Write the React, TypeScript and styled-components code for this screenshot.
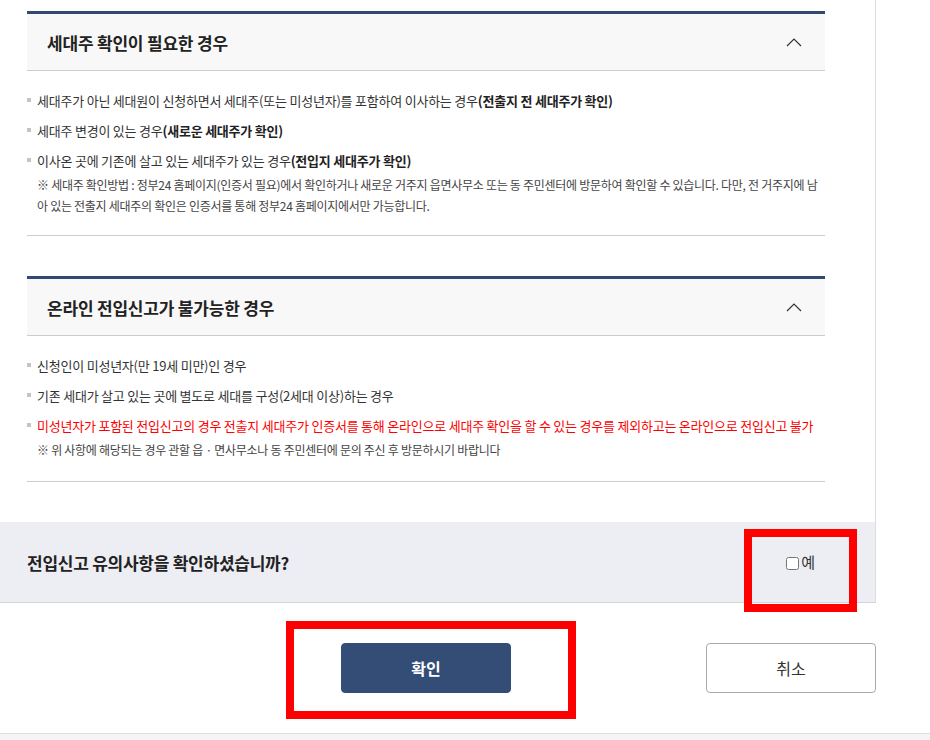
import React from 'react';
import styled, { createGlobalStyle } from 'styled-components';

const GlobalStyle = createGlobalStyle`
  html, body {
    margin: 0;
    padding: 0;
    background: #fff;
  }
  body {
    font-family: "Noto Sans CJK KR", "Noto Sans", sans-serif;
    color: #333;
  }
`;

const Page = styled.div`
  width: 930px;
  min-height: 740px;
  display: flex;
  flex-direction: column;
`;

const Panel = styled.div`
  width: 876px;
  box-sizing: border-box;
  border-right: 1px solid #ddd;
`;

const Inner = styled.div`
  padding: 11px 50px 0 27px;
`;

const Section = styled.section`
  margin-bottom: 40px;
`;

const SectionHead = styled.div`
  height: 56px;
  display: flex;
  align-items: center;
  justify-content: space-between;
  padding: 0 23px 0 20px;
  background: #f8f8f8;
  border-top: 3px solid #34496f;
  border-bottom: 1px solid #ccc;
`;

const SectionTitle = styled.h3`
  margin: 0;
  font-size: 17px;
  font-weight: 700;
  letter-spacing: -0.2px;
  color: #222;
`;

const SectionBody = styled.ul<{ $pb?: number }>`
  list-style: none;
  margin: 0;
  padding: 15px 0 ${(p) => p.$pb ?? 19}px;
  border-bottom: 1px solid #ccc;
`;

const Item = styled.li<{ $red?: boolean }>`
  position: relative;
  padding-left: 10px;
  font-size: 13px;
  line-height: 30px;
  letter-spacing: -0.22px;
  color: ${(p) => (p.$red ? '#ff0000' : '#333')};
  &::before {
    content: '';
    position: absolute;
    left: 0;
    top: 12px;
    width: 4px;
    height: 4px;
    background: #c4c4c4;
  }
`;

const Strong = styled.b`
  font-weight: 700;
  color: #222;
`;

const Note = styled.p`
  margin: -2px 0 0;
  padding: 0 2px 0 10px;
  font-size: 12px;
  line-height: 21px;
  letter-spacing: -0.28px;
  word-break: break-all;
  color: #444;
`;

const Chevron = () => (
  <svg width="16" height="10" viewBox="0 0 16 10">
    <polyline points="1,9 8,2 15,9" fill="none" stroke="#333" strokeWidth="1.2" />
  </svg>
);

const ConfirmBar = styled.div`
  position: relative;
  height: 80px;
  display: flex;
  align-items: center;
  justify-content: space-between;
  padding: 0 60px 0 27px;
  background: #edeef3;
  border-bottom: 1px solid #d5d5d5;
`;

const Question = styled.strong`
  font-size: 17px;
  font-weight: 700;
  letter-spacing: -0.25px;
  color: #222;
`;

const CheckLabel = styled.label`
  display: flex;
  align-items: center;
  gap: 2px;
  font-size: 15px;
  color: #333;
  margin-top: -2px;
  input {
    margin: 0;
    width: 13px;
    height: 13px;
    margin-top: 4px;
  }
`;

const Mark = styled.div<{ $w: number; $h: number; $l: number; $t: number }>`
  position: absolute;
  left: ${(p) => p.$l}px;
  top: ${(p) => p.$t}px;
  width: ${(p) => p.$w}px;
  height: ${(p) => p.$h}px;
  box-sizing: border-box;
  border: 8px solid #ff0000;
  pointer-events: none;
`;

const ButtonRow = styled.div`
  position: relative;
  width: 876px;
  display: flex;
  align-items: center;
  padding: 40px 0 40px 341px;
  box-sizing: border-box;
`;

const Button = styled.button<{ $primary?: boolean; $push?: boolean }>`
  width: 170px;
  height: 50px;
  border-radius: 4px;
  font-family: "Noto Sans CJK KR", sans-serif;
  font-size: 16px;
  font-weight: ${(p) => (p.$primary ? 700 : 400)};
  color: ${(p) => (p.$primary ? '#fff' : '#333')};
  background: ${(p) => (p.$primary ? '#344d77' : '#fff')};
  border: 1px solid ${(p) => (p.$primary ? '#344d77' : '#aaa')};
  margin-left: ${(p) => (p.$push ? 'auto' : '0')};
  cursor: pointer;
`;

const Footer = styled.div`
  flex: 1;
  border-top: 1px solid #ddd;
  background: #f5f5f5;
`;

export default function App() {
  return (
    <Page>
      <GlobalStyle />
      <Panel>
        <Inner>
          <Section>
            <SectionHead>
              <SectionTitle>세대주 확인이 필요한 경우</SectionTitle>
              <Chevron />
            </SectionHead>
            <SectionBody>
              <Item>
                세대주가 아닌 세대원이 신청하면서 세대주(또는 미성년자)를 포함하여 이사하는 경우
                <Strong>(전출지 전 세대주가 확인)</Strong>
              </Item>
              <Item>
                세대주 변경이 있는 경우<Strong>(새로운 세대주가 확인)</Strong>
              </Item>
              <Item>
                이사온 곳에 기존에 살고 있는 세대주가 있는 경우<Strong>(전입지 세대주가 확인)</Strong>
              </Item>
              <Note>
                ※ 세대주 확인방법 : 정부24 홈페이지(인증서 필요)에서 확인하거나 새로운 거주지 읍면사무소 또는 동 주민센터에 방문하여 확인할 수 있습니다. 다만, 전 거주지에 남아 있는 전출지 세대주의 확인은 인증서를 통해 정부24 홈페이지에서만 가능합니다.
              </Note>
            </SectionBody>
          </Section>
          <Section>
            <SectionHead>
              <SectionTitle>온라인 전입신고가 불가능한 경우</SectionTitle>
              <Chevron />
            </SectionHead>
            <SectionBody $pb={21}>
              <Item>신청인이 미성년자(만 19세 미만)인 경우</Item>
              <Item>기존 세대가 살고 있는 곳에 별도로 세대를 구성(2세대 이상)하는 경우</Item>
              <Item $red>
                미성년자가 포함된 전입신고의 경우 전출지 세대주가 인증서를 통해 온라인으로 세대주 확인을 할 수 있는 경우를 제외하고는 온라인으로 전입신고 불가
              </Item>
              <Note>※ 위 사항에 해당되는 경우 관할 읍 · 면사무소나 동 주민센터에 문의 주신 후 방문하시기 바랍니다</Note>
            </SectionBody>
          </Section>
        </Inner>
        <ConfirmBar>
          <Question>전입신고 유의사항을 확인하셨습니까?</Question>
          <CheckLabel>
            <input type="checkbox" />
            예
          </CheckLabel>
          <Mark $l={744} $t={7} $w={113} $h={83} />
        </ConfirmBar>
      </Panel>
      <ButtonRow>
        <Button $primary>확인</Button>
        <Button $push>취소</Button>
        <Mark $l={286} $t={18} $w={290} $h={98} />
      </ButtonRow>
      <Footer />
    </Page>
  );
}
